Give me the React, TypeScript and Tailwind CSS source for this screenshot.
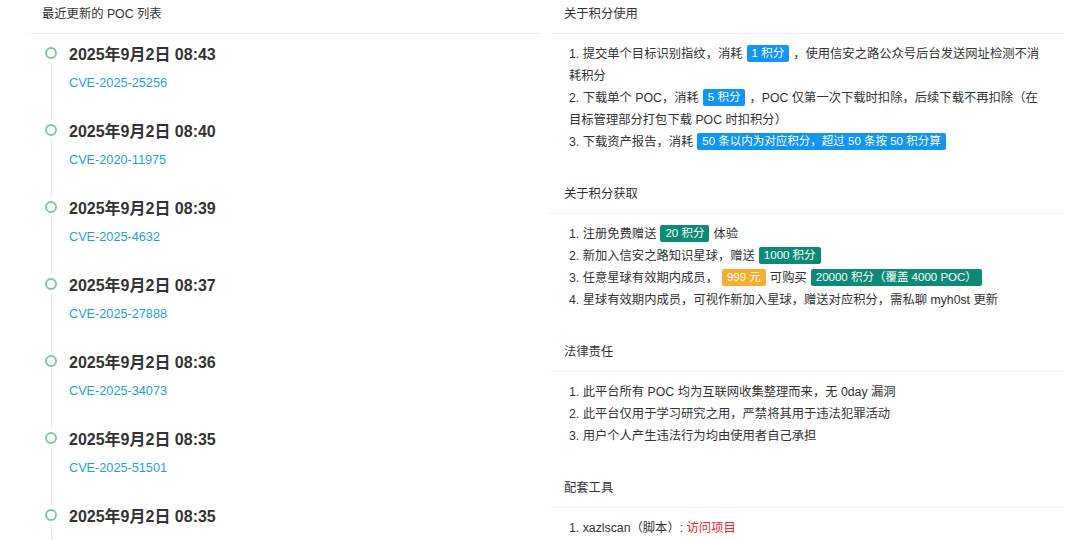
import React from "react";

const FONT = { fontFamily: "'Liberation Sans','Noto Sans CJK SC',sans-serif" };

const items = [
  ["2025年9月2日 08:43", "CVE-2025-25256"],
  ["2025年9月2日 08:40", "CVE-2020-11975"],
  ["2025年9月2日 08:39", "CVE-2025-4632"],
  ["2025年9月2日 08:37", "CVE-2025-27888"],
  ["2025年9月2日 08:36", "CVE-2025-34073"],
  ["2025年9月2日 08:35", "CVE-2025-51501"],
  ["2025年9月2日 08:35", "CVE-2025-51500"],
];

function Badge({ color, children }: { color: "blue" | "teal" | "orange"; children: React.ReactNode }) {
  const cls =
    color === "blue"
      ? "bg-[#1296f0]"
      : color === "teal"
      ? "bg-[#0d8a76]"
      : "bg-[#fbad2f]";
  return (
    <span
      className={`${cls} inline-block h-[17px] px-[5px] mx-[4px] rounded-[2px] text-white text-[11.5px] leading-[17px] align-[1px]`}
    >
      {children}
    </span>
  );
}

function Header({ children }: { children: React.ReactNode }) {
  return (
    <div className="shrink-0 h-[34px] flex items-center pb-[5px] pl-[14px] border-b border-[#f2f2f2] text-[12.3px] text-[#333]">
      {children}
    </div>
  );
}

function Section({ title, children }: { title: string; children: React.ReactNode }) {
  return (
    <div className="shrink-0 mb-[27px]">
      <Header>{title}</Header>
      <div className="pt-[9px] pl-[19px] pr-[20px] text-[12.3px] leading-[22px] text-[#333]">{children}</div>
    </div>
  );
}

export default function App() {
  return (
    <div className="w-[1080px] h-[540px] overflow-hidden bg-white flex" style={FONT}>
      <div className="ml-[28px] w-[514px] flex flex-col shrink-0">
        <Header>最近更新的 POC 列表</Header>
        <div className="shrink-0 pt-[9px] pl-[17px]">
          {items.map(([t, c], i) => (
            <div key={i} className="flex h-[77px]">
              <div className="w-[12px] flex flex-col items-center">
                <div className="mt-[4px] w-[12px] h-[12px] rounded-full border-2 border-[#7bcb9c] shrink-0" />
                <div className="flex-1 w-px bg-[#e9e9e9] mt-[3px]" />
              </div>
              <div className="ml-[12px]">
                <div className="text-[16px] leading-[24px] font-bold text-[#333]">{t}</div>
                <div className="mt-[6px] text-[12.7px] leading-[20px] text-[#1d9fe6]">{c}</div>
              </div>
            </div>
          ))}
        </div>
      </div>
      <div className="ml-[8px] w-[515px] flex flex-col shrink-0">
        <Section title="关于积分使用">
          <div>
            1. 提交单个目标识别指纹，消耗<Badge color="blue">1 积分</Badge>，使用信安之路公众号后台发送网址检测不消耗积分
          </div>
          <div>
            2. 下载单个 POC，消耗<Badge color="blue">5 积分</Badge>，POC 仅第一次下载时扣除，后续下载不再扣除（在目标管理部分打包下载 POC 时扣积分）
          </div>
          <div>
            3. 下载资产报告，消耗<Badge color="blue">50 条以内为对应积分，超过 50 条按 50 积分算</Badge>
          </div>
        </Section>
        <Section title="关于积分获取">
          <div>
            1. 注册免费赠送<Badge color="teal">20 积分</Badge>体验
          </div>
          <div>
            2. 新加入信安之路知识星球，赠送<Badge color="teal">1000 积分</Badge>
          </div>
          <div>
            3. 任意星球有效期内成员，<Badge color="orange">999 元</Badge>可购买<Badge color="teal">20000 积分（覆盖 4000 POC）</Badge>
          </div>
          <div>4. 星球有效期内成员，可视作新加入星球，赠送对应积分，需私聊 myh0st 更新</div>
        </Section>
        <Section title="法律责任">
          <div>1. 此平台所有 POC 均为互联网收集整理而来，无 0day 漏洞</div>
          <div>2. 此平台仅用于学习研究之用，严禁将其用于违法犯罪活动</div>
          <div>3. 用户个人产生违法行为均由使用者自己承担</div>
        </Section>
        <Section title="配套工具">
          <div>
            1. xazlscan（脚本）: <span className="text-[#f5222d]">访问项目</span>
          </div>
        </Section>
      </div>
    </div>
  );
}
